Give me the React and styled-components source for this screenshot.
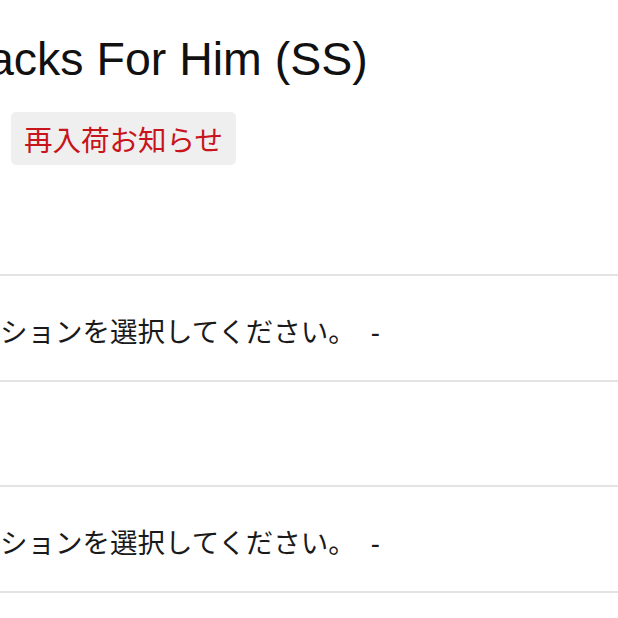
import React from 'react';
import styled, { createGlobalStyle } from 'styled-components';

const GlobalStyle = createGlobalStyle`
	html, body {
		margin: 0;
		padding: 0;
		background: #ffffff;
		overflow: hidden;
	}
	body {
		font-family: 'Liberation Sans', 'Noto Sans CJK JP', sans-serif;
		color: #111111;
	}
`;

const Page = styled.div`
	width: 618px;
	height: 618px;
	overflow: hidden;
	display: flex;
	flex-direction: column;
`;

const Title = styled.h1`
	margin: 30px 0 0 -12px;
	font-family: 'Liberation Sans', 'Noto Sans CJK JP', sans-serif;
	font-weight: 400;
	font-size: 46.5px;
	line-height: 58px;
	color: #111111;
	white-space: nowrap;
`;

const NotifyButton = styled.button`
	align-self: flex-start;
	margin: 24px 0 0 11px;
	padding: 0 13px;
	height: 53px;
	border: none;
	border-radius: 5px;
	background: #efefef;
	color: #c8141b;
	font-family: 'Noto Sans CJK JP', sans-serif;
	font-size: 28.5px;
	line-height: 53px;
	cursor: pointer;
`;

const Options = styled.div`
	display: flex;
	flex-direction: column;
	gap: 103px;
	margin-top: 109px;
`;

const Select = styled.div`
	display: flex;
	align-items: center;
	box-sizing: border-box;
	height: 108px;
	padding-top: 4px;
	border-top: 2px solid #e3e3e3;
	border-bottom: 2px solid #e3e3e3;
`;

const SelectLabel = styled.span`
	font-family: 'Noto Sans CJK JP', sans-serif;
	font-size: 27.5px;
	color: #1a1a1a;
	white-space: nowrap;
`;

const Dash = styled.span`
	margin-left: 15px;
	font-family: 'Liberation Sans', sans-serif;
`;

const options = ['ションを選択してください。', 'ションを選択してください。'];

const App = () => {
	return (
		<Page>
			<GlobalStyle />
			<Title>acks For Him (SS)</Title>
			<NotifyButton>再入荷お知らせ</NotifyButton>
			<Options>
				{options.map((label, i) => (
					<Select key={i}>
						<SelectLabel>
							{label}
							<Dash>-</Dash>
						</SelectLabel>
					</Select>
				))}
			</Options>
		</Page>
	);
};

export default App;
